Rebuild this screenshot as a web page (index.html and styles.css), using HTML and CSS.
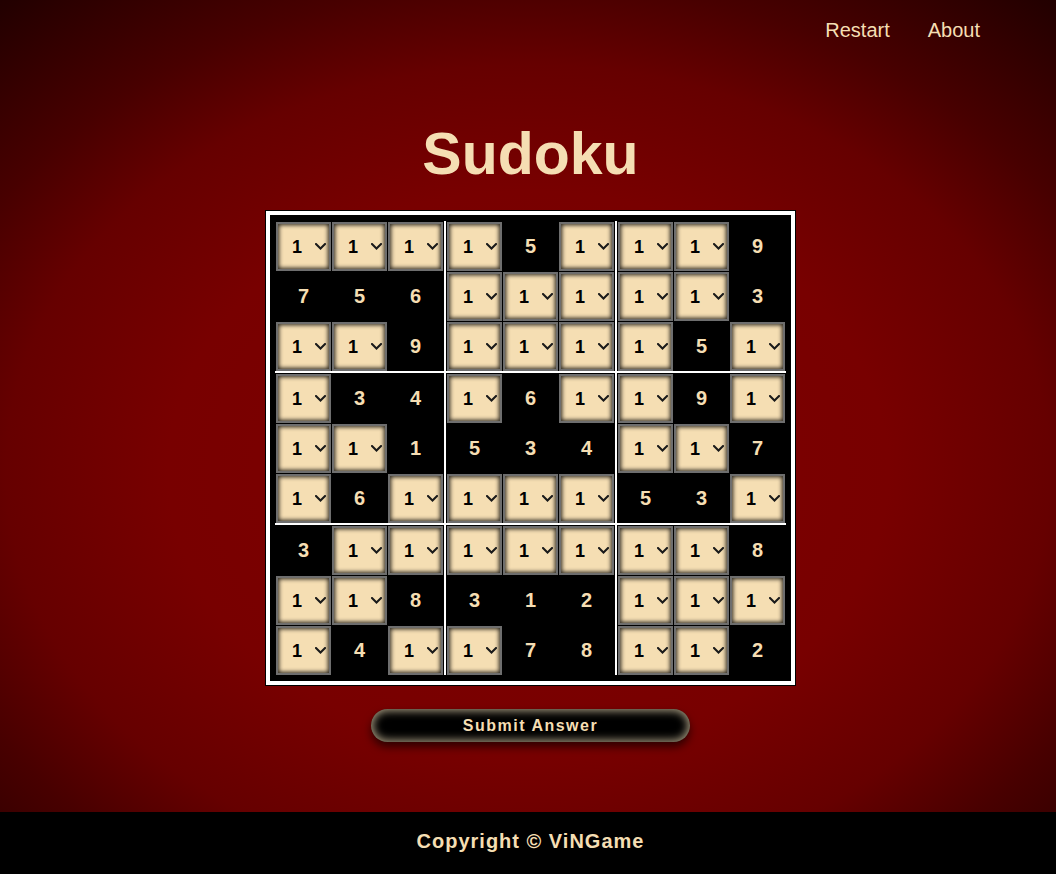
FILE: index.html
```html
<!DOCTYPE html>
<html lang="en">
<head>
<meta charset="utf-8">
<title>Sudoku</title>
<link rel="stylesheet" href="styles.css">
</head>
<body>
<div class="page">
  <nav class="topnav">
    <a href="#" class="navlink">Restart</a>
    <a href="#" class="navlink">About</a>
  </nav>
  <main class="content">
    <h1 class="title">Sudoku</h1>
    <div class="board">
      <div class="blocks">
        <div class="block">
          <label class="cell"><select class="pick"><option>1</option><option>2</option><option>3</option><option>4</option><option>5</option><option>6</option><option>7</option><option>8</option><option>9</option></select><svg class="chev" viewBox="0 0 11 7"><path d="M1 1l4.5 4.5L10 1"/></svg></label>
          <label class="cell"><select class="pick"><option>1</option><option>2</option><option>3</option><option>4</option><option>5</option><option>6</option><option>7</option><option>8</option><option>9</option></select><svg class="chev" viewBox="0 0 11 7"><path d="M1 1l4.5 4.5L10 1"/></svg></label>
          <label class="cell"><select class="pick"><option>1</option><option>2</option><option>3</option><option>4</option><option>5</option><option>6</option><option>7</option><option>8</option><option>9</option></select><svg class="chev" viewBox="0 0 11 7"><path d="M1 1l4.5 4.5L10 1"/></svg></label>
          <div class="given">7</div>
          <div class="given">5</div>
          <div class="given">6</div>
          <label class="cell"><select class="pick"><option>1</option><option>2</option><option>3</option><option>4</option><option>5</option><option>6</option><option>7</option><option>8</option><option>9</option></select><svg class="chev" viewBox="0 0 11 7"><path d="M1 1l4.5 4.5L10 1"/></svg></label>
          <label class="cell"><select class="pick"><option>1</option><option>2</option><option>3</option><option>4</option><option>5</option><option>6</option><option>7</option><option>8</option><option>9</option></select><svg class="chev" viewBox="0 0 11 7"><path d="M1 1l4.5 4.5L10 1"/></svg></label>
          <div class="given">9</div>
        </div>
        <div class="block">
          <label class="cell"><select class="pick"><option>1</option><option>2</option><option>3</option><option>4</option><option>5</option><option>6</option><option>7</option><option>8</option><option>9</option></select><svg class="chev" viewBox="0 0 11 7"><path d="M1 1l4.5 4.5L10 1"/></svg></label>
          <div class="given">5</div>
          <label class="cell"><select class="pick"><option>1</option><option>2</option><option>3</option><option>4</option><option>5</option><option>6</option><option>7</option><option>8</option><option>9</option></select><svg class="chev" viewBox="0 0 11 7"><path d="M1 1l4.5 4.5L10 1"/></svg></label>
          <label class="cell"><select class="pick"><option>1</option><option>2</option><option>3</option><option>4</option><option>5</option><option>6</option><option>7</option><option>8</option><option>9</option></select><svg class="chev" viewBox="0 0 11 7"><path d="M1 1l4.5 4.5L10 1"/></svg></label>
          <label class="cell"><select class="pick"><option>1</option><option>2</option><option>3</option><option>4</option><option>5</option><option>6</option><option>7</option><option>8</option><option>9</option></select><svg class="chev" viewBox="0 0 11 7"><path d="M1 1l4.5 4.5L10 1"/></svg></label>
          <label class="cell"><select class="pick"><option>1</option><option>2</option><option>3</option><option>4</option><option>5</option><option>6</option><option>7</option><option>8</option><option>9</option></select><svg class="chev" viewBox="0 0 11 7"><path d="M1 1l4.5 4.5L10 1"/></svg></label>
          <label class="cell"><select class="pick"><option>1</option><option>2</option><option>3</option><option>4</option><option>5</option><option>6</option><option>7</option><option>8</option><option>9</option></select><svg class="chev" viewBox="0 0 11 7"><path d="M1 1l4.5 4.5L10 1"/></svg></label>
          <label class="cell"><select class="pick"><option>1</option><option>2</option><option>3</option><option>4</option><option>5</option><option>6</option><option>7</option><option>8</option><option>9</option></select><svg class="chev" viewBox="0 0 11 7"><path d="M1 1l4.5 4.5L10 1"/></svg></label>
          <label class="cell"><select class="pick"><option>1</option><option>2</option><option>3</option><option>4</option><option>5</option><option>6</option><option>7</option><option>8</option><option>9</option></select><svg class="chev" viewBox="0 0 11 7"><path d="M1 1l4.5 4.5L10 1"/></svg></label>
        </div>
        <div class="block">
          <label class="cell"><select class="pick"><option>1</option><option>2</option><option>3</option><option>4</option><option>5</option><option>6</option><option>7</option><option>8</option><option>9</option></select><svg class="chev" viewBox="0 0 11 7"><path d="M1 1l4.5 4.5L10 1"/></svg></label>
          <label class="cell"><select class="pick"><option>1</option><option>2</option><option>3</option><option>4</option><option>5</option><option>6</option><option>7</option><option>8</option><option>9</option></select><svg class="chev" viewBox="0 0 11 7"><path d="M1 1l4.5 4.5L10 1"/></svg></label>
          <div class="given">9</div>
          <label class="cell"><select class="pick"><option>1</option><option>2</option><option>3</option><option>4</option><option>5</option><option>6</option><option>7</option><option>8</option><option>9</option></select><svg class="chev" viewBox="0 0 11 7"><path d="M1 1l4.5 4.5L10 1"/></svg></label>
          <label class="cell"><select class="pick"><option>1</option><option>2</option><option>3</option><option>4</option><option>5</option><option>6</option><option>7</option><option>8</option><option>9</option></select><svg class="chev" viewBox="0 0 11 7"><path d="M1 1l4.5 4.5L10 1"/></svg></label>
          <div class="given">3</div>
          <label class="cell"><select class="pick"><option>1</option><option>2</option><option>3</option><option>4</option><option>5</option><option>6</option><option>7</option><option>8</option><option>9</option></select><svg class="chev" viewBox="0 0 11 7"><path d="M1 1l4.5 4.5L10 1"/></svg></label>
          <div class="given">5</div>
          <label class="cell"><select class="pick"><option>1</option><option>2</option><option>3</option><option>4</option><option>5</option><option>6</option><option>7</option><option>8</option><option>9</option></select><svg class="chev" viewBox="0 0 11 7"><path d="M1 1l4.5 4.5L10 1"/></svg></label>
        </div>
        <div class="block">
          <label class="cell"><select class="pick"><option>1</option><option>2</option><option>3</option><option>4</option><option>5</option><option>6</option><option>7</option><option>8</option><option>9</option></select><svg class="chev" viewBox="0 0 11 7"><path d="M1 1l4.5 4.5L10 1"/></svg></label>
          <div class="given">3</div>
          <div class="given">4</div>
          <label class="cell"><select class="pick"><option>1</option><option>2</option><option>3</option><option>4</option><option>5</option><option>6</option><option>7</option><option>8</option><option>9</option></select><svg class="chev" viewBox="0 0 11 7"><path d="M1 1l4.5 4.5L10 1"/></svg></label>
          <label class="cell"><select class="pick"><option>1</option><option>2</option><option>3</option><option>4</option><option>5</option><option>6</option><option>7</option><option>8</option><option>9</option></select><svg class="chev" viewBox="0 0 11 7"><path d="M1 1l4.5 4.5L10 1"/></svg></label>
          <div class="given">1</div>
          <label class="cell"><select class="pick"><option>1</option><option>2</option><option>3</option><option>4</option><option>5</option><option>6</option><option>7</option><option>8</option><option>9</option></select><svg class="chev" viewBox="0 0 11 7"><path d="M1 1l4.5 4.5L10 1"/></svg></label>
          <div class="given">6</div>
          <label class="cell"><select class="pick"><option>1</option><option>2</option><option>3</option><option>4</option><option>5</option><option>6</option><option>7</option><option>8</option><option>9</option></select><svg class="chev" viewBox="0 0 11 7"><path d="M1 1l4.5 4.5L10 1"/></svg></label>
        </div>
        <div class="block">
          <label class="cell"><select class="pick"><option>1</option><option>2</option><option>3</option><option>4</option><option>5</option><option>6</option><option>7</option><option>8</option><option>9</option></select><svg class="chev" viewBox="0 0 11 7"><path d="M1 1l4.5 4.5L10 1"/></svg></label>
          <div class="given">6</div>
          <label class="cell"><select class="pick"><option>1</option><option>2</option><option>3</option><option>4</option><option>5</option><option>6</option><option>7</option><option>8</option><option>9</option></select><svg class="chev" viewBox="0 0 11 7"><path d="M1 1l4.5 4.5L10 1"/></svg></label>
          <div class="given">5</div>
          <div class="given">3</div>
          <div class="given">4</div>
          <label class="cell"><select class="pick"><option>1</option><option>2</option><option>3</option><option>4</option><option>5</option><option>6</option><option>7</option><option>8</option><option>9</option></select><svg class="chev" viewBox="0 0 11 7"><path d="M1 1l4.5 4.5L10 1"/></svg></label>
          <label class="cell"><select class="pick"><option>1</option><option>2</option><option>3</option><option>4</option><option>5</option><option>6</option><option>7</option><option>8</option><option>9</option></select><svg class="chev" viewBox="0 0 11 7"><path d="M1 1l4.5 4.5L10 1"/></svg></label>
          <label class="cell"><select class="pick"><option>1</option><option>2</option><option>3</option><option>4</option><option>5</option><option>6</option><option>7</option><option>8</option><option>9</option></select><svg class="chev" viewBox="0 0 11 7"><path d="M1 1l4.5 4.5L10 1"/></svg></label>
        </div>
        <div class="block">
          <label class="cell"><select class="pick"><option>1</option><option>2</option><option>3</option><option>4</option><option>5</option><option>6</option><option>7</option><option>8</option><option>9</option></select><svg class="chev" viewBox="0 0 11 7"><path d="M1 1l4.5 4.5L10 1"/></svg></label>
          <div class="given">9</div>
          <label class="cell"><select class="pick"><option>1</option><option>2</option><option>3</option><option>4</option><option>5</option><option>6</option><option>7</option><option>8</option><option>9</option></select><svg class="chev" viewBox="0 0 11 7"><path d="M1 1l4.5 4.5L10 1"/></svg></label>
          <label class="cell"><select class="pick"><option>1</option><option>2</option><option>3</option><option>4</option><option>5</option><option>6</option><option>7</option><option>8</option><option>9</option></select><svg class="chev" viewBox="0 0 11 7"><path d="M1 1l4.5 4.5L10 1"/></svg></label>
          <label class="cell"><select class="pick"><option>1</option><option>2</option><option>3</option><option>4</option><option>5</option><option>6</option><option>7</option><option>8</option><option>9</option></select><svg class="chev" viewBox="0 0 11 7"><path d="M1 1l4.5 4.5L10 1"/></svg></label>
          <div class="given">7</div>
          <div class="given">5</div>
          <div class="given">3</div>
          <label class="cell"><select class="pick"><option>1</option><option>2</option><option>3</option><option>4</option><option>5</option><option>6</option><option>7</option><option>8</option><option>9</option></select><svg class="chev" viewBox="0 0 11 7"><path d="M1 1l4.5 4.5L10 1"/></svg></label>
        </div>
        <div class="block">
          <div class="given">3</div>
          <label class="cell"><select class="pick"><option>1</option><option>2</option><option>3</option><option>4</option><option>5</option><option>6</option><option>7</option><option>8</option><option>9</option></select><svg class="chev" viewBox="0 0 11 7"><path d="M1 1l4.5 4.5L10 1"/></svg></label>
          <label class="cell"><select class="pick"><option>1</option><option>2</option><option>3</option><option>4</option><option>5</option><option>6</option><option>7</option><option>8</option><option>9</option></select><svg class="chev" viewBox="0 0 11 7"><path d="M1 1l4.5 4.5L10 1"/></svg></label>
          <label class="cell"><select class="pick"><option>1</option><option>2</option><option>3</option><option>4</option><option>5</option><option>6</option><option>7</option><option>8</option><option>9</option></select><svg class="chev" viewBox="0 0 11 7"><path d="M1 1l4.5 4.5L10 1"/></svg></label>
          <label class="cell"><select class="pick"><option>1</option><option>2</option><option>3</option><option>4</option><option>5</option><option>6</option><option>7</option><option>8</option><option>9</option></select><svg class="chev" viewBox="0 0 11 7"><path d="M1 1l4.5 4.5L10 1"/></svg></label>
          <div class="given">8</div>
          <label class="cell"><select class="pick"><option>1</option><option>2</option><option>3</option><option>4</option><option>5</option><option>6</option><option>7</option><option>8</option><option>9</option></select><svg class="chev" viewBox="0 0 11 7"><path d="M1 1l4.5 4.5L10 1"/></svg></label>
          <div class="given">4</div>
          <label class="cell"><select class="pick"><option>1</option><option>2</option><option>3</option><option>4</option><option>5</option><option>6</option><option>7</option><option>8</option><option>9</option></select><svg class="chev" viewBox="0 0 11 7"><path d="M1 1l4.5 4.5L10 1"/></svg></label>
        </div>
        <div class="block">
          <label class="cell"><select class="pick"><option>1</option><option>2</option><option>3</option><option>4</option><option>5</option><option>6</option><option>7</option><option>8</option><option>9</option></select><svg class="chev" viewBox="0 0 11 7"><path d="M1 1l4.5 4.5L10 1"/></svg></label>
          <label class="cell"><select class="pick"><option>1</option><option>2</option><option>3</option><option>4</option><option>5</option><option>6</option><option>7</option><option>8</option><option>9</option></select><svg class="chev" viewBox="0 0 11 7"><path d="M1 1l4.5 4.5L10 1"/></svg></label>
          <label class="cell"><select class="pick"><option>1</option><option>2</option><option>3</option><option>4</option><option>5</option><option>6</option><option>7</option><option>8</option><option>9</option></select><svg class="chev" viewBox="0 0 11 7"><path d="M1 1l4.5 4.5L10 1"/></svg></label>
          <div class="given">3</div>
          <div class="given">1</div>
          <div class="given">2</div>
          <label class="cell"><select class="pick"><option>1</option><option>2</option><option>3</option><option>4</option><option>5</option><option>6</option><option>7</option><option>8</option><option>9</option></select><svg class="chev" viewBox="0 0 11 7"><path d="M1 1l4.5 4.5L10 1"/></svg></label>
          <div class="given">7</div>
          <div class="given">8</div>
        </div>
        <div class="block">
          <label class="cell"><select class="pick"><option>1</option><option>2</option><option>3</option><option>4</option><option>5</option><option>6</option><option>7</option><option>8</option><option>9</option></select><svg class="chev" viewBox="0 0 11 7"><path d="M1 1l4.5 4.5L10 1"/></svg></label>
          <label class="cell"><select class="pick"><option>1</option><option>2</option><option>3</option><option>4</option><option>5</option><option>6</option><option>7</option><option>8</option><option>9</option></select><svg class="chev" viewBox="0 0 11 7"><path d="M1 1l4.5 4.5L10 1"/></svg></label>
          <div class="given">8</div>
          <label class="cell"><select class="pick"><option>1</option><option>2</option><option>3</option><option>4</option><option>5</option><option>6</option><option>7</option><option>8</option><option>9</option></select><svg class="chev" viewBox="0 0 11 7"><path d="M1 1l4.5 4.5L10 1"/></svg></label>
          <label class="cell"><select class="pick"><option>1</option><option>2</option><option>3</option><option>4</option><option>5</option><option>6</option><option>7</option><option>8</option><option>9</option></select><svg class="chev" viewBox="0 0 11 7"><path d="M1 1l4.5 4.5L10 1"/></svg></label>
          <label class="cell"><select class="pick"><option>1</option><option>2</option><option>3</option><option>4</option><option>5</option><option>6</option><option>7</option><option>8</option><option>9</option></select><svg class="chev" viewBox="0 0 11 7"><path d="M1 1l4.5 4.5L10 1"/></svg></label>
          <label class="cell"><select class="pick"><option>1</option><option>2</option><option>3</option><option>4</option><option>5</option><option>6</option><option>7</option><option>8</option><option>9</option></select><svg class="chev" viewBox="0 0 11 7"><path d="M1 1l4.5 4.5L10 1"/></svg></label>
          <label class="cell"><select class="pick"><option>1</option><option>2</option><option>3</option><option>4</option><option>5</option><option>6</option><option>7</option><option>8</option><option>9</option></select><svg class="chev" viewBox="0 0 11 7"><path d="M1 1l4.5 4.5L10 1"/></svg></label>
          <div class="given">2</div>
        </div>
      </div>
    </div>
    <button class="submit" type="button">Submit Answer</button>
  </main>
</div>
<footer class="footer">Copyright © ViNGame</footer>
</body>
</html>
```
FILE: styles.css
```css
* { box-sizing: border-box; }
html, body { margin: 0; padding: 0; }
body {
  font-family: "Liberation Sans", Arial, sans-serif;
  background: #000;
  color: #f5deb3;
}
.page {
  min-height: 812px;
  background: radial-gradient(ellipse 900px 700px at 50% 58%, #800000 0%, #780000 40%, #660000 58%, #480000 70%, #240000 88%, #100000 100%);
  display: flex;
  flex-direction: column;
}
.topnav {
  display: flex;
  justify-content: flex-end;
  gap: 38px;
  padding: 19px 76px 0 0;
}
.navlink {
  color: #f5deb3;
  text-decoration: none;
  font-size: 20px;
  line-height: 23px;
}
.content {
  display: flex;
  flex-direction: column;
  align-items: center;
  padding-left: 5px;
}
.title {
  margin: 78px 0 23px;
  font-size: 59px;
  line-height: 68px;
  font-weight: bold;
  color: #f5deb3;
}
.board {
  background: #000;
  border: 4px solid #fff;
  padding: 6px 5px;
  box-shadow: 0 0 0 1px #000;
}
.blocks {
  display: grid;
  grid-template-columns: repeat(3, auto);
  gap: 2px;
  background: #fff;
}
.block {
  display: grid;
  grid-template-columns: repeat(3, 55px);
  grid-template-rows: repeat(3, 49px);
  gap: 1px;
  padding: 1px 1px 0;
  background: #000;
}
.cell {
  position: relative;
  display: block;
}
.pick {
  display: block;
  width: 55px;
  height: 49px;
  margin: 0;
  padding: 0 0 0 14px;
  -webkit-appearance: none;
  appearance: none;
  background-color: #f5deb3;
  border: 2px solid #6e6e6e;
  border-radius: 0;
  box-shadow: inset 0 0 4px 1px rgba(0, 0, 0, 0.85);
  font: bold 18px "Liberation Sans", Arial, sans-serif;
  color: #000;
  cursor: pointer;
}
.chev {
  position: absolute;
  right: 5px;
  top: 21px;
  width: 11px;
  height: 7px;
  pointer-events: none;
}
.chev path {
  fill: none;
  stroke: #1a1a1a;
  stroke-width: 2;
  stroke-linecap: square;
}
.given {
  display: flex;
  align-items: center;
  justify-content: center;
  font-weight: bold;
  font-size: 20px;
  color: #f5deb3;
}
.submit {
  margin-top: 24px;
  width: 319px;
  height: 33px;
  border: none;
  border-radius: 17px;
  background: #000;
  color: #f5deb3;
  font: bold 16px "Liberation Sans", Arial, sans-serif;
  letter-spacing: 1.5px;
  box-shadow: inset 0 0 8px 2px rgba(222, 205, 170, 0.75), 0 5px 8px rgba(0, 0, 0, 0.6);
  cursor: pointer;
}
.footer {
  height: 62px;
  display: flex;
  align-items: center;
  justify-content: center;
  padding: 0 0 3px 5px;
  background: #000;
  color: #f5deb3;
  font-size: 20px;
  font-weight: bold;
  letter-spacing: 1px;
}
```
